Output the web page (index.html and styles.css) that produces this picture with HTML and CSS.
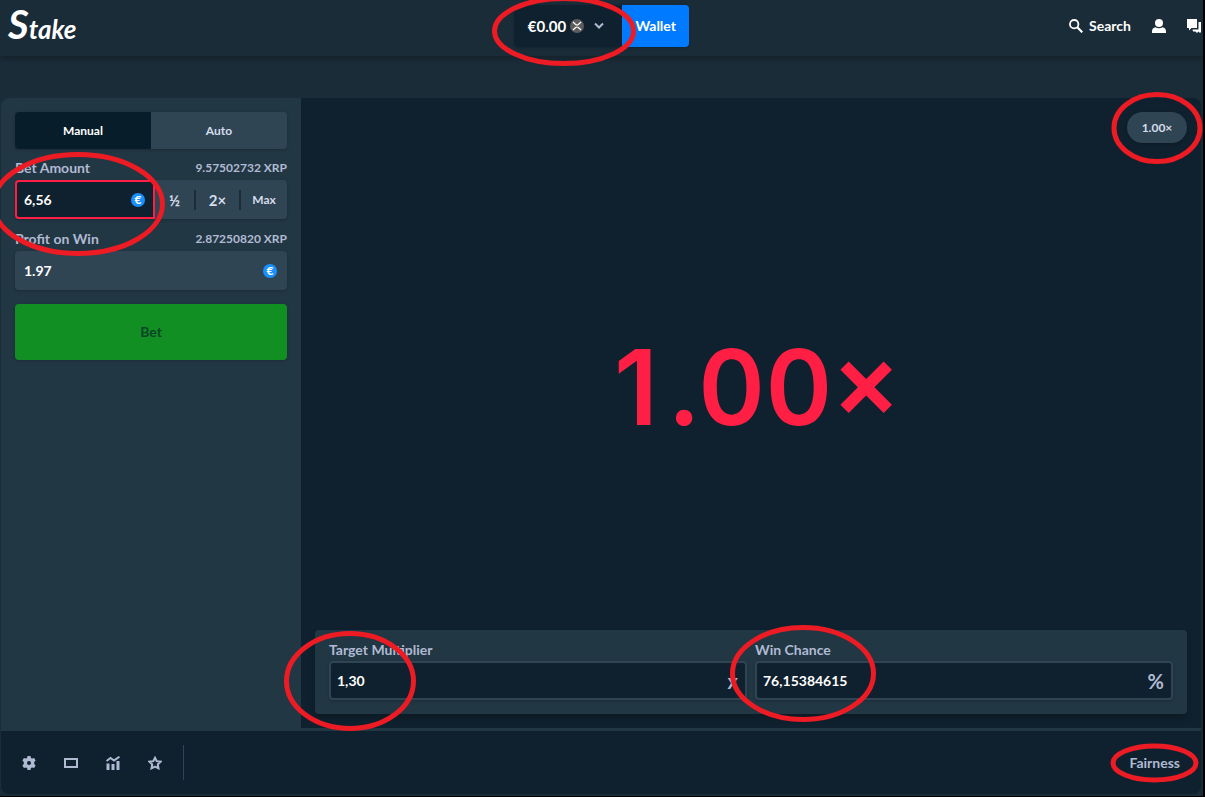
FILE: index.html
```
<!DOCTYPE html>
<html lang="en">
<head>
	<meta charset="UTF-8">
	<title>Stake</title>
	<link rel="stylesheet" href="styles.css">
</head>
<body>
	<header class="header">
		<a href="#" class="logo">Stake</a>

		<div class="balance">
			<button class="balance-amount">
				<span>€0.00</span>
				<svg width="14" height="14" viewBox="0 0 14 14">
					<circle cx="7" cy="7" r="7" fill="#5c5c5c"/>
					<path d="M3 3l2.4 2.3q1.6 1.4 3.2 0L11 3M3 11l2.4-2.3q1.6-1.4 3.2 0L11 11" fill="none" stroke="#fff" stroke-width="1.2"/>
				</svg>
				<svg class="chevron" width="10" height="8" viewBox="0 0 10 8">
					<path d="M1 1.5l4 4 4-4" fill="none" stroke="#b1bad3" stroke-width="2"/>
				</svg>
			</button>
			<button class="wallet">Wallet</button>
		</div>

		<nav class="nav">
			<button class="nav-item">
				<svg width="14" height="14" viewBox="0 0 14 14" fill="none" stroke="#fff">
					<circle cx="5.2" cy="5.2" r="4.2" stroke-width="1.8"/>
					<path d="M8.3 8.3l5 5" stroke-width="2.2"/>
				</svg>
				Search
			</button>
			<button class="nav-item" aria-label="Account">
				<svg width="14" height="14" viewBox="0 0 14 14" fill="#fff">
					<circle cx="7" cy="4" r="4"/>
					<path d="M0 14v-1.5C0 10 1.5 8.7 3.4 8.3c2 1.4 5.2 1.4 7.2 0C12.5 8.7 14 10 14 12.5V14z"/>
				</svg>
			</button>
			<button class="nav-item" aria-label="Chat">
				<svg width="14" height="14" viewBox="0 0 14 14" fill="#fff">
					<path d="M0 0h10v9H4.5L2 11.5V9H0z"/>
					<path d="M11.5 3H14v10l-1 1-1.5-1.5L10 14l-1.5-1.5H6l-.5-2h6z"/>
				</svg>
			</button>
		</nav>
	</header>

	<main class="game">
		<div class="game-body">
			<form class="sidebar">
				<div class="tabs">
					<button type="button" class="tab on">Manual</button>
					<button type="button" class="tab">Auto</button>
				</div>

				<div class="label-row">
					<label for="amount">Bet Amount</label>
					<span class="crypto">9.57502732 XRP</span>
				</div>
				<div class="bet-row">
					<div class="field bet-field">
						<input type="text" id="amount" value="6,56">
						<span class="coin">€</span>
					</div>
					<button type="button" class="step">½</button>
					<button type="button" class="step">2×</button>
					<button type="button" class="step">Max</button>
				</div>

				<div class="label-row">
					<label for="profit">Profit on Win</label>
					<span class="crypto">2.87250820 XRP</span>
				</div>
				<div class="field profit-field">
					<input type="text" id="profit" value="1.97" readonly>
					<span class="coin">€</span>
				</div>

				<button type="button" class="bet">Bet</button>
			</form>

			<section class="stage">
				<div class="history">
					<button class="pill">1.00×</button>
				</div>
				<div class="result"><span class="digit">1</span>.00×</div>
				<div class="controls">
					<div class="control">
						<label for="target">Target Multiplier</label>
						<div class="field">
							<input type="text" id="target" value="1,30">
							<span class="unit">x</span>
						</div>
					</div>
					<div class="control">
						<label for="chance">Win Chance</label>
						<div class="field">
							<input type="text" id="chance" value="76,15384615">
							<span class="unit">%</span>
						</div>
					</div>
				</div>
			</section>
		</div>

		<footer class="game-footer">
			<div class="tools">
				<button class="tool" aria-label="Settings">
					<svg width="14" height="14" viewBox="0 0 14 14">
						<path fill="#b1bad3" fill-rule="evenodd" d="M5.5 0h3l.4 2 1.2.6 2-.7 1.5 2.5L12.2 6v2l1.4 1.6-1.5 2.5-2-.7-1.2.6-.4 2h-3l-.4-2-1.2-.6-2 .7L.4 9.6 1.8 8V6L.4 4.4l1.5-2.5 2 .7L5.1 2zM7 5a2 2 0 100 4 2 2 0 000-4z"/>
					</svg>
				</button>
				<button class="tool" aria-label="Theatre mode">
					<svg width="14" height="14" viewBox="0 0 14 14">
						<rect x="1" y="3" width="12" height="8" fill="none" stroke="#b1bad3" stroke-width="2"/>
					</svg>
				</button>
				<button class="tool" aria-label="Live stats">
					<svg width="14" height="14" viewBox="0 0 14 14" fill="none" stroke="#b1bad3">
						<path d="M.5 5L4.5 2l3.5 2.500L13.500.7" stroke-width="2"/>
						<path d="M2 14V7.500M7 14V8M12 14V5" stroke-width="3"/>
					</svg>
				</button>
				<button class="tool" aria-label="Favourite">
					<svg width="14" height="14" viewBox="0 0 14 14">
						<path d="M7 1.8l1.7 3.4 3.9.5-2.8 2.7.7 3.9L7 10.5l-3.5 1.8.7-3.9L1.400 5.700l3.900-.5z" fill="none" stroke="#b1bad3" stroke-width="2"/>
					</svg>
				</button>
			</div>
			<a href="#" class="fairness">Fairness</a>
		</footer>
	</main>

	<!-- red pen marks over the page -->
	<svg class="marks" width="1205" height="797" viewBox="0 0 1205 797">
		<ellipse cx="564" cy="31" rx="69.5" ry="32.5"/>
		<ellipse cx="1157" cy="128" rx="43" ry="33.5"/>
		<ellipse cx="78" cy="204" rx="84.5" ry="49.5"/>
		<ellipse cx="350" cy="681" rx="63.5" ry="47.5"/>
		<ellipse cx="803" cy="673.5" rx="70.5" ry="46"/>
		<ellipse cx="1154.5" cy="763" rx="41.5" ry="17"/>
	</svg>
</body>
</html>
```
FILE: styles.css
```
* {
	box-sizing: border-box;
}
body {
	display: flex;
	flex-direction: column;
	position: relative;
	min-height: 100vh;
	margin: 0;
	border-right: 2px solid #000;
	border-bottom: 1px solid #000;
	overflow-x: hidden;
	background: #1a2c38;
	color: #fff;
	font-family: Lato, "Open Sans", sans-serif;
	font-size: 14px;
	font-weight: bold;
	line-height: 20px;
}
button, input {
	margin: 0;
	padding: 0;
	border: 0;
	background: none;
	color: inherit;
	font: inherit;
}
button {
	cursor: pointer;
}
a {
	color: inherit;
	text-decoration: none;
}
svg {
	display: block;
}

/* header */
.header {
	display: grid;
	grid-template-columns: 1fr auto 1fr;
	align-items: center;
	height: 56px;
	padding: 0 2px 4px;
	background: #1a2c38;
	box-shadow: 0 2px 6px rgba(0,0,0,.3);
}
.logo {
	padding-left: 6px;
	font-family: "Brush Script MT", Lato, sans-serif;
	font-size: 26px;
	font-style: italic;
	line-height: 40px;
}
.logo::first-letter {
	font-size: 40px;
}
.balance {
	display: flex;
	height: 42px;
	border-radius: 4px;
	overflow: hidden;
	box-shadow: 0 1px 3px rgba(0,0,0,.2);
}
.balance-amount {
	display: flex;
	align-items: center;
	gap: 4px;
	padding: 0 18px 0 14px;
	background: #0f212e;
	font-size: 15px;
}
.chevron {
	margin-left: 6px;
}
.wallet {
	width: 67px;
	background: #007bff;
}
.nav {
	display: flex;
	justify-content: flex-end;
	gap: 21px;
}
.nav-item {
	display: flex;
	align-items: center;
	gap: 6px;
}

/* game frame */
.game {
	display: flex;
	flex: 1;
	flex-direction: column;
	margin: 42px 2px 2px 1px;
	border-radius: 8px;
	overflow: hidden;
	background: #0f212e;
}
.game-body {
	display: flex;
	flex: 1;
	border-bottom: 3px solid #213743;
}
.sidebar {
	width: 300px;
	padding: 14px;
	background: #213743;
}
.tabs {
	display: flex;
	height: 37px;
	margin-bottom: 9px;
	border-radius: 4px;
	overflow: hidden;
	box-shadow: 0 1px 3px rgba(0,0,0,.2);
}
.tab {
	flex: 1;
	background: #2f4553;
	color: #d5dceb;
	font-size: 12px;
}
.tab.on {
	background: #071d2a;
	color: #fff;
}
label, .crypto {
	color: #b1bad3;
}
.label-row {
	display: flex;
	justify-content: space-between;
	margin-bottom: 2px;
}
.crypto {
	font-size: 12px;
}
.field {
	display: flex;
	align-items: center;
	height: 39px;
	padding: 0 8px 0 7px;
	border: 2px solid #2f4553;
	border-radius: 4px;
	background: #0f212e;
	box-shadow: 0 1px 3px rgba(0,0,0,.2);
}
.field input {
	flex: 1;
	min-width: 0;
	outline: none;
}
.coin {
	width: 14px;
	height: 14px;
	border-radius: 50%;
	background: #1890ff;
	font-size: 12px;
	line-height: 14px;
	text-align: center;
}
.bet-row {
	display: grid;
	grid-template-columns: 140px 39px 45px 1fr;
	align-items: center;
	margin-bottom: 10px;
	border-radius: 4px;
	background: #2f4553;
	box-shadow: 0 1px 3px rgba(0,0,0,.2);
}
.bet-field {
	border-color: #ff1f44;
	border-radius: 4px 0 0 4px;
	box-shadow: none;
}
.step {
	height: 20px;
	color: #d5dceb;
	font-size: 15px;
}
.step + .step {
	border-left: 2px solid #1a2c38;
}
.step:last-child {
	font-size: 12px;
}
.profit-field {
	margin-bottom: 14px;
	background: #2f4553;
}
.bet {
	width: 100%;
	height: 56px;
	border-radius: 4px;
	background: #118f22;
	box-shadow: 0 1px 3px rgba(0,0,0,.2);
	color: #0c4527;
}

/* right side */
.stage {
	display: flex;
	flex: 1;
	flex-direction: column;
	padding: 14px;
}
.history {
	display: flex;
	justify-content: flex-end;
}
.pill {
	width: 60px;
	height: 31px;
	border-radius: 16px;
	background: #2f4553;
	box-shadow: 0 1px 3px rgba(0,0,0,.2);
	color: #d5dceb;
	font-size: 12px;
}
.result {
	display: flex;
	flex: 1;
	align-items: center;
	justify-content: center;
	color: #ff1f44;
	font-family: Inter, sans-serif;
	font-size: 104px;
	font-variant-numeric: tabular-nums;
	font-weight: 600;
	line-height: 120px;
}
.digit {
	width: 68px;
	font-variant-numeric: normal;
	text-align: center;
}
.controls {
	display: flex;
	gap: 8px;
	padding: 10px 14px 14px;
	border-radius: 4px;
	background: #213743;
	box-shadow: 0 4px 6px rgba(0,0,0,.2);
}
.control {
	flex: 1;
}
.control label {
	display: block;
	margin-bottom: 1px;
}
.control .field {
	padding: 0 7px 0 6px;
}
.unit {
	color: #b1bad3;
	font-size: 20px;
}

/* footer */
.game-footer {
	display: flex;
	align-items: center;
	justify-content: space-between;
	height: 63px;
	padding: 0 21px;
}
.tools {
	display: flex;
	align-items: center;
	gap: 28px;
	height: 35px;
	padding-right: 21px;
	border-right: 1px solid #2f4553;
}
.fairness {
	color: #b1bad3;
}

.marks {
	position: absolute;
	top: 0;
	left: 0;
	fill: none;
	stroke: #ed1c24;
	stroke-width: 5px;
	pointer-events: none;
}
```
